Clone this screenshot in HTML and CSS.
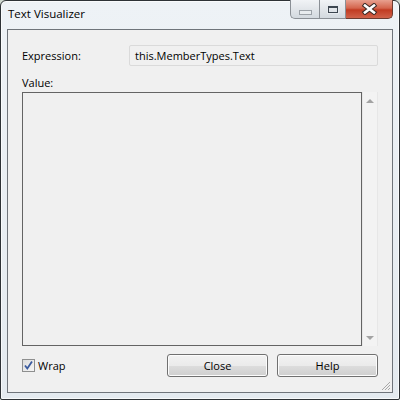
FILE: index.html
```html
<!DOCTYPE html>
<html lang="en">
  <head>
    <meta charset="UTF-8" />
    <title>Text Visualizer</title>
    <link rel="stylesheet" href="styles.css">
  </head>
  <body>
    <div class="window">
      <div class="titlebar">
        <span class="title">Text Visualizer</span>
        <div class="caption-buttons">
          <div class="cap-btn cap-min"><span class="min-glyph"></span></div>
          <div class="cap-btn cap-max"><span class="max-glyph"></span></div>
          <div class="cap-btn cap-close">
            <svg width="17" height="12" viewBox="0 0 17 12">
              <path d="M4 2.5 L13 9.5 M13 2.5 L4 9.5" stroke="#3b2a26" stroke-width="4.6" stroke-linecap="square" fill="none" />
              <path d="M4 2.5 L13 9.5 M13 2.5 L4 9.5" stroke="#ffffff" stroke-width="2.6" stroke-linecap="square" fill="none" />
            </svg>
          </div>
        </div>
      </div>

      <div class="client">
        <div class="expr-row">
          <span class="label">Expression:</span>
          <div class="expr-box">this.MemberTypes.Text</div>
        </div>

        <div class="label value-label">Value:</div>

        <div class="value-row">
          <div class="value-box"></div>
          <div class="scrollbar">
            <span class="arrow arrow-up"></span>
            <span class="arrow arrow-down"></span>
          </div>
        </div>

        <div class="bottom-row">
          <label class="wrap">
            <span class="checkbox">
              <svg width="11" height="11" viewBox="0 0 11 11">
                <path d="M2 5.5 L4.3 8.5 L9 1.5" stroke="#3a5a9e" stroke-width="1.8" fill="none" />
              </svg>
            </span>
            Wrap
          </label>
          <div class="button-group">
            <button class="btn">Close</button>
            <button class="btn">Help</button>
          </div>
        </div>

        <!-- size grip sits over the corner -->
        <svg class="grip" width="10" height="10" viewBox="0 0 10 10">
          <path d="M9 1 L1 9 M9 4 L4 9 M9 7 L7 9" stroke="#a8a8a8" stroke-width="1" fill="none" />
        </svg>
      </div>
    </div>
  </body>
</html>
```

FILE: styles.css
```css
body {
  margin: 0;
  background: #cfd8d0;
  font-family: "Open Sans", "Noto Sans", sans-serif;
  font-size: 11px;
  color: #000;
}
.window {
  width: 400px;
  height: 400px;
  box-sizing: border-box;
  border: 1px solid #2e3236;
  border-radius: 6px 6px 2px 2px;
  background: linear-gradient(#eef2f6, #e4eaef);
  box-shadow: inset 0 0 0 1px rgba(255, 255, 255, 0.7);
  display: flex;
  flex-direction: column;
}
.titlebar {
  height: 28px;
  display: flex;
  justify-content: space-between;
  align-items: flex-start;
  padding: 0 6px 0 7px;
}
.title {
  margin-top: 5px;
  font-size: 11.5px;
}
.caption-buttons {
  display: flex;
  margin-top: -1px;
}
.cap-btn {
  height: 19px;
  box-sizing: border-box;
  border: 1px solid #8b9096;
  border-top: none;
  display: flex;
  align-items: center;
  justify-content: center;
  background: linear-gradient(#f1f3f6, #e2e6ea 50%, #d3d9df);
}
.cap-min {
  width: 29px;
  border-radius: 0 0 0 5px;
  border-right: none;
}
.cap-max {
  width: 27px;
}
.cap-close {
  width: 47px;
  border-left: none;
  border-color: #6d3b30;
  border-radius: 0 0 5px 0;
  background: linear-gradient(#e8a08f, #d4654d 45%, #c13b22 55%, #d0624a);
}
.min-glyph {
  width: 11px;
  height: 3px;
  margin-top: 6px;
  border: 1px solid #9ca2a8;
  background: #e8ecef;
}
.max-glyph {
  width: 8px;
  height: 4px;
  border: 1px solid #3d4650;
  border-top-width: 2px;
  box-shadow: 0 0 0 1px #e6eaee;
}
.client {
  position: relative;
  flex: 1;
  margin: 0 6px 6px;
  border: 1px solid #6f747a;
  background: #f0f0f0;
  padding: 15px 14px 15px 14px;
  display: flex;
  flex-direction: column;
}
.expr-row {
  display: flex;
  align-items: center;
}
.label {
  line-height: 16px;
}
.expr-row .label {
  width: 107px;
}
.expr-box {
  flex: 1;
  height: 21px;
  box-sizing: border-box;
  border: 1px solid #dadada;
  border-radius: 2px;
  background: #f0f0f0;
  padding: 0 5px;
  line-height: 19px;
}
.value-label {
  margin-top: 9px;
  height: 17px;
}
.value-row {
  flex: 1;
  display: flex;
}
.value-box {
  width: 340px;
  box-sizing: border-box;
  border: 1px solid #646464;
  background: #f0f0f0;
}
.scrollbar {
  flex: 1;
  box-sizing: border-box;
  border-left: 1px solid #e7e7e7;
  border-right: 1px solid #e7e7e7;
  background: #f3f3f3;
  display: flex;
  flex-direction: column;
  justify-content: space-between;
  align-items: center;
  padding: 7px 0 6px;
}
.arrow {
  width: 0;
  height: 0;
  border-left: 4px solid transparent;
  border-right: 4px solid transparent;
}
.arrow-up {
  border-bottom: 4px solid #a3a3a3;
}
.arrow-down {
  border-top: 4px solid #a3a3a3;
}
.bottom-row {
  margin-top: 8px;
  display: flex;
  justify-content: space-between;
  align-items: center;
}
.wrap {
  display: flex;
  align-items: center;
  gap: 3px;
}
.checkbox {
  width: 13px;
  height: 13px;
  box-sizing: border-box;
  border: 1px solid #8e8f8f;
  background: linear-gradient(135deg, #dcdcdc, #f6f6f6);
  display: flex;
  align-items: center;
  justify-content: center;
}
.button-group {
  display: flex;
  gap: 9px;
}
.btn {
  width: 101px;
  height: 23px;
  border: 1px solid #707070;
  border-radius: 3px;
  background: linear-gradient(#f2f2f2, #ebebeb 50%, #dddddd 51%, #cfcfcf);
  box-shadow: inset 0 0 0 1px #fcfcfc;
  font-family: "Open Sans", "Noto Sans", sans-serif;
  font-size: 11px;
  color: #000;
  padding: 0;
}
.grip {
  position: absolute;
  right: 1px;
  bottom: 1px;
}
```
